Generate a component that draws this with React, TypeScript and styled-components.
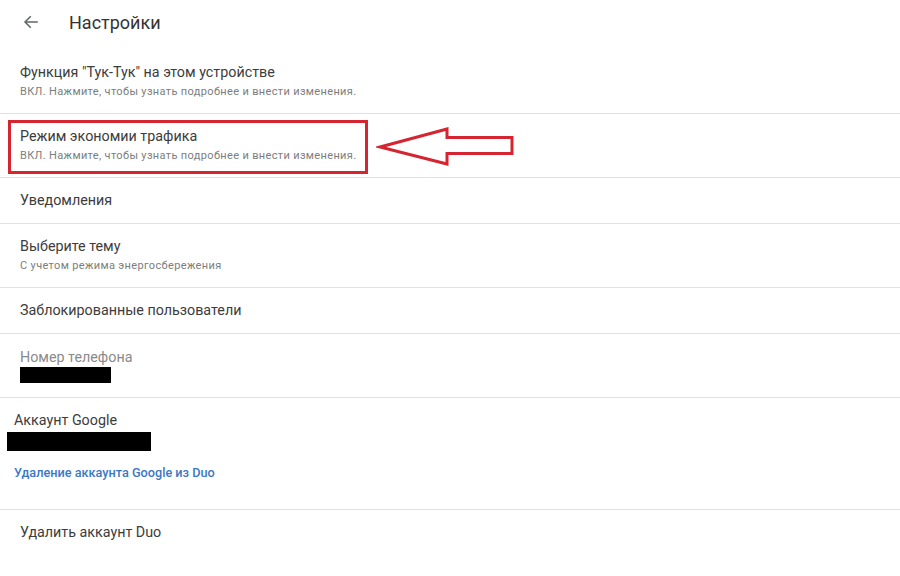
import React from "react";
import styled, { createGlobalStyle } from "styled-components";

const Global = createGlobalStyle`
  html, body { margin: 0; padding: 0; background: #ffffff; }
  body { font-family: Roboto, "Noto Sans", "Liberation Sans", sans-serif; width: 900px; height: 576px; overflow: hidden; }
`;

const Page = styled.div`
  width: 900px;
  display: flex;
  flex-direction: column;
  background: #fff;
`;

const Header = styled.header`
  height: 44px;
  display: flex;
  align-items: center;
  padding: 0 0 6px 22px;
  gap: 29px;
`;

const BackButton = styled.span`
  display: flex;
  width: 18px;
  height: 18px;
  color: #5f6368;
`;

const HeaderTitle = styled.h1`
  margin: 0;
  font-size: 18px;
  font-weight: 400;
  color: #333;
`;

const Row = styled.div<{ $pl?: number; $pt?: number; $pb?: number }>`
  position: relative;
  display: flex;
  flex-direction: column;
  align-items: flex-start;
  padding: ${(p) => p.$pt ?? 12}px 20px ${(p) => p.$pb ?? 13}px ${(p) => p.$pl ?? 20}px;
  border-bottom: 1px solid #e2e2e2;
  &:last-child { border-bottom: none; }
`;

const Title = styled.div<{ $muted?: boolean }>`
  font-size: 14.3px;
  line-height: 20px;
  color: ${(p) => (p.$muted ? "#8a8a8a" : "#3c3c3c")};
`;

const Subtitle = styled.div`
  margin-top: 2px;
  font-size: 11px;
  line-height: 16px;
  color: #7d7d7d;
  letter-spacing: 0.35px;
`;

const Redacted = styled.div<{ $w: number; $h: number; $ml?: number; $mt?: number }>`
  width: ${(p) => p.$w}px;
  height: ${(p) => p.$h}px;
  margin-left: ${(p) => p.$ml ?? 0}px;
  margin-top: ${(p) => p.$mt ?? 0}px;
  background: #000;
`;

const Link = styled.a`
  margin-top: 14px;
  font-size: 12.7px;
  line-height: 16px;
  font-weight: 500;
  color: #3b78c4;
  text-decoration: none;
`;

const Highlight = styled.div`
  position: absolute;
  left: 8px;
  top: 6px;
  width: 354px;
  height: 48px;
  border: 3px solid #d42530;
  pointer-events: none;
`;

const Pointer = styled.svg`
  position: absolute;
  left: 376px;
  top: 10px;
  pointer-events: none;
`;

export default function App() {
  return (
    <Page>
      <Global />
      <Header>
        <BackButton>
          <svg width="18" height="18" viewBox="0 0 24 24" fill="none" stroke="currentColor" strokeWidth="2" strokeLinecap="square">
            <path d="M20 12H5" />
            <path d="M11 5l-7 7 7 7" />
          </svg>
        </BackButton>
        <HeaderTitle>Настройки</HeaderTitle>
      </Header>

      <Row>
        <Title>Функция "Тук-Тук" на этом устройстве</Title>
        <Subtitle>ВКЛ. Нажмите, чтобы узнать подробнее и внести изменения.</Subtitle>
      </Row>

      <Row>
        <Title>Режим экономии трафика</Title>
        <Subtitle>ВКЛ. Нажмите, чтобы узнать подробнее и внести изменения.</Subtitle>
        <Highlight />
        <Pointer width="142" height="44" viewBox="0 0 142 44">
          <path
            d="M4 23 L71 5 L71 13.5 L136 13.5 L136 29.5 L71 29.5 L71 40 Z"
            fill="#fff"
            stroke="#d42530"
            strokeWidth="3"
            strokeLinejoin="miter"
          />
        </Pointer>
      </Row>

      <Row>
        <Title>Уведомления</Title>
      </Row>

      <Row>
        <Title>Выберите тему</Title>
        <Subtitle>С учетом режима энергосбережения</Subtitle>
      </Row>

      <Row>
        <Title>Заблокированные пользователи</Title>
      </Row>

      <Row $pt={13} $pb={14}>
        <Title $muted>Номер телефона</Title>
        <Redacted $w={91} $h={16} />
      </Row>

      <Row $pl={14} $pt={12} $pb={28}>
        <Title>Аккаунт Google</Title>
        <Redacted $w={144} $h={19} $ml={-7} $mt={2} />
        <Link href="#">Удаление аккаунта Google из Duo</Link>
      </Row>

      <Row>
        <Title>Удалить аккаунт Duo</Title>
      </Row>
    </Page>
  );
}
